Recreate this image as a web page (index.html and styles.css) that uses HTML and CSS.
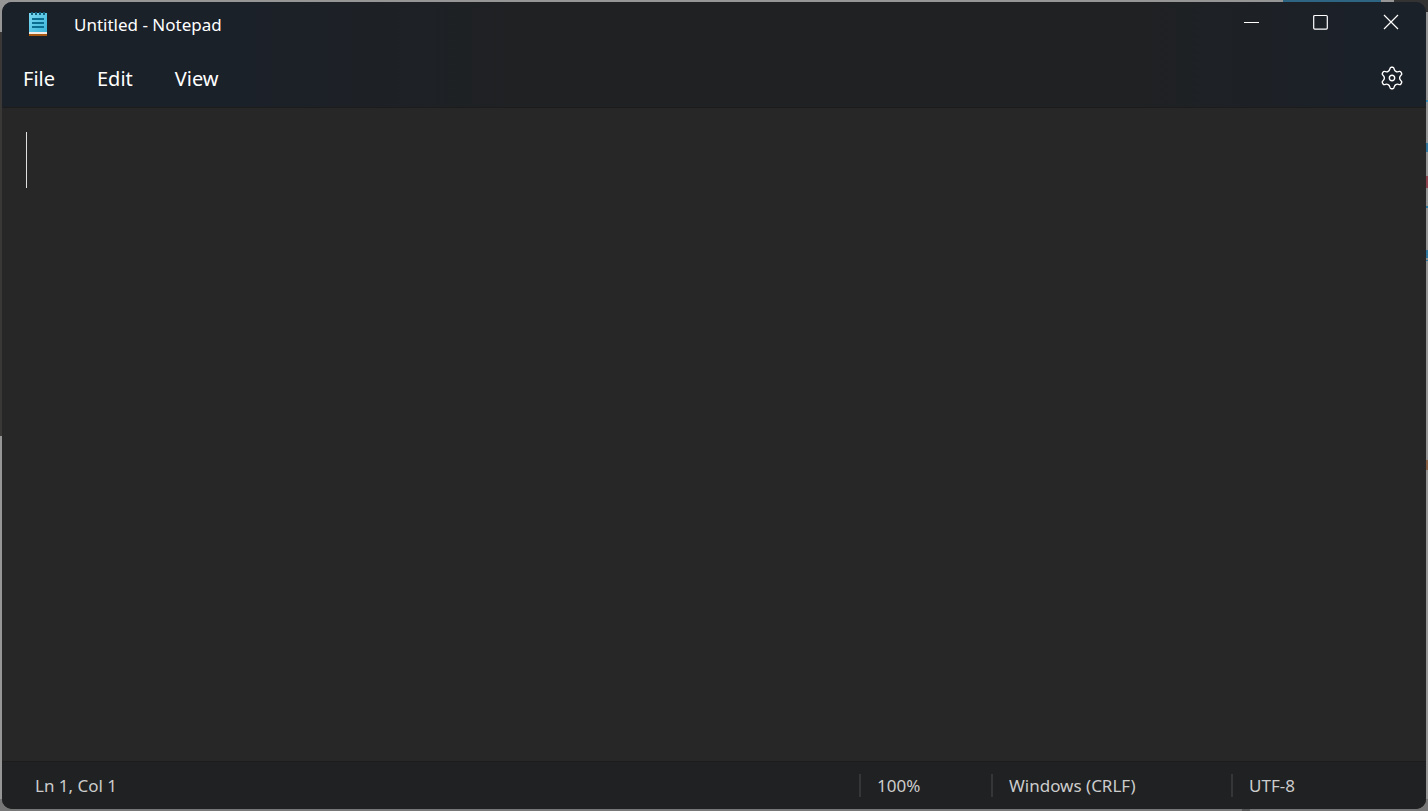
FILE: index.html
```html
<!DOCTYPE html>
<html lang="en">
<head>
    <meta charset="UTF-8">
    <meta name="viewport" content="width=device-width, initial-scale=1.0">
    <title>Untitled - Notepad</title>
    <link rel="stylesheet" href="styles.css">
</head>
<body>
    <div class="window">
        <header class="window-header">
            <div class="title-bar">
                <svg class="app-icon" width="18" height="24" viewBox="0 0 18 24" aria-hidden="true">
                    <defs>
                        <linearGradient id="paper" x1="0" y1="0" x2="1" y2="1">
                            <stop offset="0" stop-color="#7ad9f2"/>
                            <stop offset="1" stop-color="#3cb4d8"/>
                        </linearGradient>
                    </defs>
                    <rect y="19" width="18" height="5" fill="#a85a12"/>
                    <rect y="19" width="18" height="3" fill="#f1ece6"/>
                    <rect y="1" width="18" height="19" fill="url(#paper)"/>
                    <path d="M3 0v3M7 0v3M11 0v3M15 0v3" stroke="#12627f" stroke-width="2"/>
                    <path d="M3 7h12M3 11h12M3 15h12" stroke="#0b6e91" stroke-width="2"/>
                </svg>
                <h1 class="window-title">Untitled - Notepad</h1>
                <div class="window-controls">
                    <button type="button" aria-label="Minimize">
                        <svg width="16" height="16" viewBox="0 0 16 16"><path d="M1 8.500h15"/></svg>
                    </button>
                    <button type="button" aria-label="Maximize">
                        <svg width="16" height="16" viewBox="0 0 16 16"><rect x="0.700" y="1.500" width="13.600" height="13.600" rx="1"/></svg>
                    </button>
                    <button type="button" aria-label="Close">
                        <svg width="16" height="16" viewBox="0 0 16 16"><path d="M1 1l14 14M15 1L1 15"/></svg>
                    </button>
                </div>
            </div>
            <nav class="menu-bar">
                <button type="button">File</button>
                <button type="button">Edit</button>
                <button type="button">View</button>
                <button type="button" class="settings" aria-label="Settings">
                    <svg width="24" height="24" viewBox="-12 -12 24 24">
                        <path d="M-2.300-8.600Q-1.800-10.700-.9-10.700H.9Q1.800-10.700 2.300-8.600C2.700-6.900 4.600-5.800 6.300-6.300Q8.400-6.900 8.800-6.100L9.700-4.600Q10.200-3.800 8.600-2.300C7.300-1.100 7.300 1.100 8.600 2.300Q10.200 3.800 9.700 4.600L8.800 6.100Q8.400 6.900 6.300 6.300C4.600 5.800 2.700 6.900 2.300 8.600Q1.800 10.700.9 10.700H-.9Q-1.800 10.700-2.300 8.600C-2.700 6.900-4.600 5.800-6.300 6.300Q-8.400 6.900-8.800 6.100L-9.700 4.600Q-10.200 3.800-8.600 2.300C-7.300 1.100-7.300-1.100-8.600-2.300Q-10.200-3.800-9.700-4.600L-8.800-6.100Q-8.400-6.900-6.300-6.300C-4.600-5.800-2.700-6.900-2.300-8.600Z"/>
                        <circle r="2.700"/>
                    </svg>
                </button>
            </nav>
        </header>

        <main class="editor">
            <textarea class="editor-text" aria-label="Text editor" spellcheck="false"></textarea>
            <span class="caret"></span>
        </main>

        <footer class="status-bar">
            <span class="status-position">Ln 1, Col 1</span>
            <span class="status-item zoom">100%</span>
            <span class="status-item line-ending">Windows (CRLF)</span>
            <span class="status-item encoding">UTF-8</span>
        </footer>
    </div>
</body>
</html>
```

FILE: styles.css
```css
:root {
    --header: #1b2129;
    --header-middle: #1f2123;
    --editor: #272727;
    --status: #202122;
    --text: #ffffff;
    --text-muted: #cccccc;
    --divider: #353637;
}

* {
    margin: 0;
    padding: 0;
    box-sizing: border-box;
}

/* slivers of the desktop show round the window */
body {
    display: flex;
    height: 100vh;
    padding: 2px;
    background:
        linear-gradient(#2d6582, #2d6582) right 47px top 0 / 98px 2px no-repeat,
        linear-gradient(#333333, #333333) right 0 top 0 / 34px 12px no-repeat,
        linear-gradient(#3d8fb5, #3d8fb5) right 0 top 100px / 2px 2px no-repeat,
        linear-gradient(#3478a0, #3478a0) right 0 top 143px / 2px 9px no-repeat,
        linear-gradient(#8f4650, #8f4650) right 0 top 176px / 2px 12px no-repeat,
        linear-gradient(#3478a0, #3478a0) right 0 top 206px / 2px 2px no-repeat,
        linear-gradient(#3478a0, #3478a0) right 0 top 250px / 2px 8px no-repeat,
        linear-gradient(#3478a0, #3478a0) right 0 top 260px / 2px 1px no-repeat,
        linear-gradient(#8a6248, #8a6248) right 0 top 460px / 2px 10px no-repeat,
        linear-gradient(#3a3836, #3a3836) left 0 top 32px / 2px 404px no-repeat,
        linear-gradient(#555555, #555555) right 178px bottom 0 / 8px 2px no-repeat,
        linear-gradient(#777777, #777777) left 0 bottom 0 / 100% 12px no-repeat,
        #969696;
    font-family: "Segoe UI", "Noto Sans", sans-serif;
    color: var(--text);
    overflow: hidden;
}

button {
    border: none;
    background: none;
    color: inherit;
    font: inherit;
}

button:hover {
    background: rgba(255, 255, 255, 0.08);
}

svg {
    display: block;
}

.window {
    flex: 1;
    display: flex;
    flex-direction: column;
    border-radius: 10px;
    background: var(--editor);
    overflow: hidden;
}

.window-header {
    background: linear-gradient(90deg, var(--header) 0%, var(--header) 16%, var(--header-middle) 36%, var(--header-middle) 80%, var(--header) 96%);
    border-bottom: 1px solid #1c1c1d;
}

.title-bar {
    display: flex;
    align-items: center;
    height: 44px;
    padding-left: 27px;
}

.window-title {
    margin-left: 27px;
    font-size: 17px;
    font-weight: 400;
}

.window-controls {
    display: flex;
    align-self: flex-start;
    margin-left: auto;
}

.window-controls button {
    display: flex;
    align-items: center;
    justify-content: center;
    width: 70px;
    height: 40px;
}

.window-controls svg,
.settings svg {
    fill: none;
    stroke: var(--text);
    stroke-width: 1.4;
    stroke-linejoin: round;
}

.window-controls svg {
    stroke-width: 1.2;
}

.menu-bar {
    display: flex;
    align-items: center;
    height: 61px;
    font-size: 20px;
}

.menu-bar button {
    height: 44px;
    padding: 4px 21px 0;
    border-radius: 6px;
}

.menu-bar .settings {
    margin-left: auto;
    padding: 2px 22px 0;
}

.editor {
    position: relative;
    flex: 1;
    display: flex;
}

.editor-text {
    flex: 1;
    padding: 24px;
    border: none;
    outline: none;
    resize: none;
    background: transparent;
    color: var(--text);
    font-family: inherit;
    font-size: 40px;
    line-height: 56px;
}

.caret {
    position: absolute;
    top: 24px;
    left: 24px;
    width: 1px;
    height: 56px;
    background: #e0e0e0;
}

.status-bar {
    display: flex;
    align-items: center;
    height: 48px;
    padding-left: 33px;
    border-top: 1px solid #1c1c1d;
    background: var(--status);
    color: var(--text-muted);
    font-size: 17px;
}

.status-position {
    flex: 1;
}

.status-item {
    padding-left: 16px;
    border-left: 2px solid var(--divider);
}

.zoom {
    width: 132px;
}

.line-ending {
    width: 240px;
}

.encoding {
    width: 195px;
}
```
